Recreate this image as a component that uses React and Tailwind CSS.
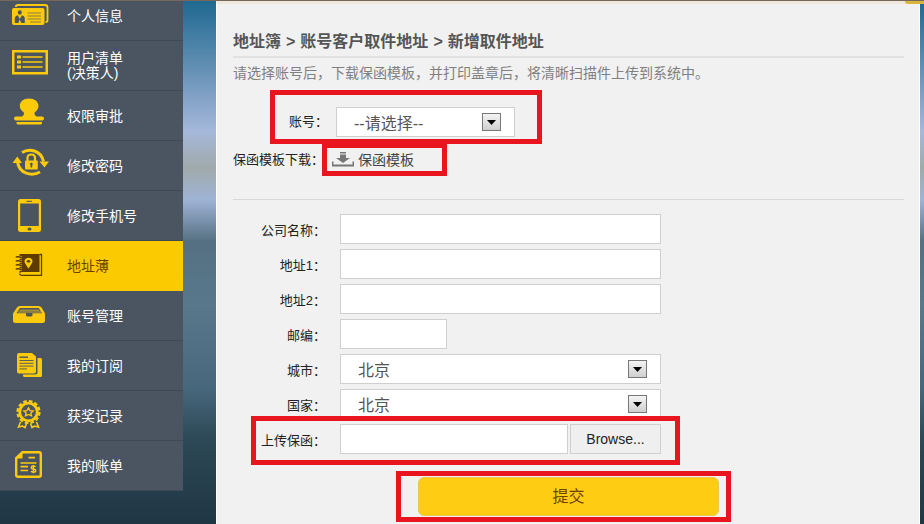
import clsx from 'clsx';

const CardIcon = () => (
  <>
    <path d="M6 11V10.5Q6 9 8 9H35Q37.500 9 37.500 11.500V24Q37.500 26 35.500 26" fill="none" stroke="currentColor" strokeWidth="1.800" />
    <rect x="2" y="12" width="32.500" height="17" rx="2" fill="currentColor" />
    <ellipse cx="9.800" cy="16.500" rx="2" ry="2.300" fill="#4b5561" />
    <path d="M4.800 27V22.500Q4.800 20 7.800 19.200L9.800 23L11.800 19.200Q14.800 20 14.800 22.500V27H11.300L9.800 23.500L8.300 27Z" fill="#4b5561" />
    <path d="M17.500 17H31M17.500 20H31M17.500 23H31M20 26H31" stroke="#4b5561" strokeOpacity="0.700" strokeWidth="0.900" />
  </>
);

const ListIcon = () => (
  <>
    <rect x="3.250" y="5.250" width="33.500" height="22" fill="none" stroke="currentColor" strokeWidth="2.500" />
    <path d="M7 9.500h4v3H7zM7 14.500h4v3H7zM7 19.500h4v3H7z" fill="currentColor" />
    <path d="M12.500 11H32.500M12.500 16H32.500M12.500 21H32.500" stroke="currentColor" strokeWidth="1.300" />
  </>
);

const StampIcon = () => (
  <>
    <path
      d="M19 2.500C24.500 2.500 28.500 5.500 28.500 10C28.500 12.800 26.800 14.800 25 16C24 17.200 24.500 19.500 26.500 20.500H32Q34 20.500 34 22.500Q34 24.500 32 24.500H6Q4 24.500 4 22.500Q4 20.500 6 20.500H12C14 19.500 14.500 17.200 13.500 16C11.500 14.800 9.800 12.800 9.800 10C9.800 5.500 13.500 2.500 19 2.500Z"
      fill="currentColor"
    />
    <path d="M6.500 26H32V27Q32 28.500 30.500 28.500H8Q6.500 28.500 6.500 27Z" fill="currentColor" />
  </>
);

const LockIcon = () => (
  <>
    <path d="M12 6.500C19 2 31 4 33.500 15.500" fill="none" stroke="currentColor" strokeWidth="3" />
    <path d="M30 26C22 30.500 9 28 7.500 15.500" fill="none" stroke="currentColor" strokeWidth="3" />
    <path d="M29.500 15.500H39L34.500 21.500ZM2.500 17L7.300 10.500L12 17Z" fill="currentColor" />
    <path d="M17.500 15.500V12Q17.500 8.500 21.300 8.500Q25 8.500 25 12V15.500" fill="none" stroke="currentColor" strokeWidth="2.200" />
    <rect x="15" y="14.500" width="12.800" height="9" rx="1" fill="currentColor" />
    <path d="M21.400 16.800a1.400 1.300 0 0 1 .8 2.400V21.500H20.600V19.200a1.400 1.300 0 0 1 .8-2.400Z" fill="#4b5561" />
  </>
);

const PhoneIcon = () => (
  <>
    <rect x="8" y="3" width="23" height="33" rx="2.500" fill="currentColor" />
    <rect x="10.200" y="7.500" width="18.600" height="22.500" fill="#4b5561" />
    <path d="M16.500 5.300H22" stroke="#4b5561" strokeWidth="1" />
    <ellipse cx="19.500" cy="33" rx="2" ry="1.600" fill="#4b5561" />
  </>
);

const BookIcon = () => (
  <>
    <path d="M9.500 8H29.500V26H12Q10 26 9.500 28Z" fill="currentColor" />
    <path d="M29.500 8.500H31.500V29.300H12Q9.800 29.300 9.800 27.800" fill="none" stroke="currentColor" strokeWidth="1.300" />
    <path d="M6.500 11.500H12M6.500 15.500H12M6.500 19.500H12M6.500 23.500H12" stroke="#fbca00" strokeWidth="2.400" />
    <path d="M6 11.500Q6.500 9.800 12 11.800M6 15.500Q6.500 13.800 12 15.800M6 19.500Q6.500 17.800 12 19.800M6 23.500Q6.500 21.800 12 23.800" fill="none" stroke="currentColor" strokeWidth="1.500" />
    <path d="M18.500 22.500C16 18.500 14.500 17 14.500 15.200C14.500 13 16.300 11.800 18.500 11.800C20.700 11.800 22.500 13 22.500 15.200C22.500 17 21 18.500 18.500 22.500Z" fill="#fbca00" />
    <ellipse cx="18.500" cy="15.300" rx="1.700" ry="1.400" fill="currentColor" />
  </>
);

const TrayIcon = () => (
  <>
    <path d="M10 10H28.500Q30.500 10 31.500 11.500L35 17.500V24.500Q35 27 32.500 27H5.500Q3 27 3 24.500V17.500L7 11.500Q8 10 10 10Z" fill="currentColor" />
    <path d="M9.800 12H28.800L32 17.200H22.500V19.200Q22.500 20.500 21 20.500H17.500Q16 20.500 16 19.200V17.200H6.500Z" fill="#4b5561" />
    <path d="M9.500 14.200H29.300M8 16H31" stroke="currentColor" strokeWidth="0.900" strokeOpacity="0.800" />
    <path d="M16.800 17H21.800V19H16.800Z" fill="#4b5561" />
  </>
);

const DocsIcon = () => (
  <>
    <path d="M27.500 12H30.500Q32 12 32 13.500V29.500Q32 31 30.500 31H14.500Q13 31 13 29.500V28.500H25.500Q27.500 28.500 27.500 26.500Z" fill="currentColor" />
    <path d="M9 7H22L26 10.500V25.500Q26 27.500 24 27.500H9Q7 27.500 7 25.500V9Q7 7 9 7Z" fill="currentColor" />
    <path d="M9.500 11.200H18" stroke="#4b5561" strokeWidth="1.400" />
    <path d="M9.500 14.500H23.500M9.500 17.300H23.500M9.500 20.100H23.500M9.500 22.900H17" stroke="#4b5561" strokeWidth="0.900" />
  </>
);

const MedalIcon = () => (
  <>
    <circle cx="18.500" cy="16" r="8.800" fill="none" stroke="currentColor" strokeWidth="2.800" />
    <circle cx="18.500" cy="16" r="10.900" fill="none" stroke="currentColor" strokeWidth="2.400" strokeDasharray="3.600 2.107" />
    <path d="M18.500 11.800L20 14.600L23.200 15L20.900 17L21.500 19.800L18.500 18.500L15.500 19.800L16.100 17L13.800 15L17 14.600Z" fill="none" stroke="currentColor" strokeWidth="1.300" />
    <path d="M10.500 26L8.500 31L12.500 30L15 31.500L16.500 27.500M26.500 26L28.500 31L24.500 30L22 31.500L20.500 27.500" fill="none" stroke="currentColor" strokeWidth="1.600" />
  </>
);

const BillIcon = () => (
  <>
    <path d="M12.500 6.300H29Q30.800 6.300 30.800 8V29Q30.800 30.700 29 30.700H8Q6.200 30.700 6.200 29V12Z" fill="none" stroke="currentColor" strokeWidth="2.400" />
    <path d="M5.500 12.500L12.500 5.500V12.500Z" fill="currentColor" />
    <path d="M18.500 11.700H25M10.500 17H26.500M10.500 20.700H18M10.500 24.500H18" stroke="currentColor" strokeWidth="1.700" />
    <path d="M25.500 20.800Q24.800 20 23.400 20Q21.300 20 21.300 21.500Q21.300 23 23.400 23Q25.700 23.100 25.700 24.700Q25.700 26.200 23.400 26.200Q21.600 26.200 21 25.200M23.400 18.900V27.300" fill="none" stroke="currentColor" strokeWidth="1.400" />
  </>
);

const menu = [
  { label: ['个人信息'], icon: CardIcon },
  { label: ['用户清单', '(决策人)'], icon: ListIcon },
  { label: ['权限审批'], icon: StampIcon },
  { label: ['修改密码'], icon: LockIcon },
  { label: ['修改手机号'], icon: PhoneIcon },
  { label: ['地址薄'], icon: BookIcon, active: true },
  { label: ['账号管理'], icon: TrayIcon },
  { label: ['我的订阅'], icon: DocsIcon },
  { label: ['获奖记录'], icon: MedalIcon },
  { label: ['我的账单'], icon: BillIcon },
];

function Sidebar() {
  return (
    <nav className="w-[183px] shrink-0 overflow-hidden">
      <ul className="-mt-[10px]">
        {menu.map(({ label, icon: Icon, active }) => (
          <li key={label[0]}>
            <a
              href="#"
              className={clsx(
                'flex h-[50px] items-center gap-[17px] border-b pl-[10px] text-sm leading-[15px]',
                active ? 'border-[#fbca00] bg-[#fbca00] text-[#6b4200]' : 'border-[#3f4954] bg-[#4b5561] text-white'
              )}
            >
              <svg
                viewBox="0 0 40 40"
                className={clsx('h-10 w-10 shrink-0', active ? 'text-[#5e3c00]' : 'text-[#fbca0c]')}
                aria-hidden="true"
              >
                <Icon />
              </svg>
              <span className="pt-px">
                {label.map((line) => (
                  <span key={line} className="block">{line}</span>
                ))}
              </span>
            </a>
          </li>
        ))}
      </ul>
    </nav>
  );
}

function Select({ id, options }) {
  return (
    <div className="relative h-[30px] w-full">
      <select
        id={id}
        className="h-full w-full appearance-none border border-[#cfcfcf] bg-white pl-[17px] pr-10 pt-[3px] text-base leading-6 text-[#555]"
      >
        {options.map((o) => (
          <option key={o}>{o}</option>
        ))}
      </select>
      <span className="pointer-events-none absolute right-[14px] top-[6px] flex h-[18px] w-[19px] items-center justify-center border border-[#777] bg-linear-to-b from-[#f4f4f4] to-[#cfcfcf]">
        <svg viewBox="0 0 9 5" className="h-[5px] w-[9px]" aria-hidden="true">
          <path d="M0 0H9L4.500 5Z" fill="#000" />
        </svg>
      </span>
    </div>
  );
}

function Row({ id, label, className, children }) {
  return (
    <div className={clsx('flex max-w-[428px] items-center gap-[14px]', className)}>
      <label htmlFor={id} className="w-[93px] shrink-0 pt-1 text-right text-[13px] leading-5 text-[#222]">
        {label}
      </label>
      {children}
    </div>
  );
}

const inputClass = 'h-[30px] min-w-0 border border-[#cfcfcf] bg-white px-2 text-sm';

export default function App() {
  return (
    <div className="relative flex min-h-screen border-t border-[#75685a] bg-[linear-gradient(#1f6990_0%,#6a93b8_14%,#a5b8da_25%,#a0aaaa_32%,#9fb3d6_38%,#557082_46%,#59788c_58%,#47677c_74%,#2d4856_84%,#1f3645_100%)] font-['Liberation_Sans','Noto_Sans_CJK_SC',sans-serif]">
      <Sidebar />

      <main className="ml-[33px] mr-1 min-w-0 flex-1 border-x border-t-3 border-x-white border-t-[#efe8dc] bg-[#f1f1f1] pb-0.5 pl-4 pr-[15px]">
        <h1 className="flex gap-[5px] border-b-2 border-[#e1e1e1] pb-[4px] pt-7 text-base leading-5 font-bold text-[#555]">
          <span>地址簿</span>
          <span>&gt;</span>
          <span>账号客户取件地址</span>
          <span>&gt;</span>
          <span>新增取件地址</span>
        </h1>
        <p className="mt-[5px] text-sm leading-5 text-[#808080]">
          请选择账号后，下载保函模板，并打印盖章后，将清晰扫描件上传到系统中。
        </p>

        <form>
          {/* Account */}
          <div className="ml-[37px] mt-[7px] flex h-[54px] w-[272px] items-center gap-2 border-5 border-[#e8141e] pl-[14px] pr-[22px] pt-[10px]">
            <label htmlFor="account" className="shrink-0 text-[13px] leading-5 text-[#222]">账号：</label>
            <Select id="account" options={['--请选择--']} />
          </div>

          {/* Template download */}
          <div className="-mt-px flex h-[33px] items-center">
            <span className="w-[89px] shrink-0 whitespace-nowrap text-[13px] leading-5 text-[#222]">保函模板下载：</span>
            <a
              href="#"
              className="z-10 flex h-full w-[125px] items-center gap-1 border-5 border-[#e8141e] bg-[#f1f1f1] pl-[5px] text-sm text-[#444]"
            >
              <svg viewBox="0 0 22 15" className="h-[15px] w-[22px] shrink-0" aria-hidden="true">
                <path d="M8 0H14V1.500H8ZM8 2.500H14V6H18L11 11L4 6H8Z" fill="#777" />
                <path d="M0 9.500H1.500V12.500H20.500V9.500H22V14.500H0Z" fill="#777" />
              </svg>
              <span>保函模板</span>
            </a>
          </div>

          {/* Address */}
          <div className="mt-[23px] flex flex-col gap-[5px] border-t border-[#d8d8d8] pt-[14px]">
            <Row id="company" label="公司名称：">
              <input id="company" type="text" className={clsx(inputClass, 'flex-1')} />
            </Row>
            <Row id="address1" label="地址1：">
              <input id="address1" type="text" className={clsx(inputClass, 'flex-1')} />
            </Row>
            <Row id="address2" label="地址2：">
              <input id="address2" type="text" className={clsx(inputClass, 'flex-1')} />
            </Row>
            <Row id="zip" label="邮编：">
              <input id="zip" type="text" className={clsx(inputClass, 'w-[107px]')} />
            </Row>
            <Row id="city" label="城市：">
              <Select id="city" options={['北京']} />
            </Row>
            <Row id="country" label="国家：">
              <Select id="country" options={['北京']} />
            </Row>
            <Row id="letter" label="上传保函：" className="relative">
              <div className="flex flex-1 gap-0.5">
                <input id="letter" type="text" className={clsx(inputClass, 'flex-1')} />
                <button type="button" className="h-[30px] w-[91px] border border-[#cfcfcf] bg-[#efefef] text-sm text-[#222]">
                  Browse...
                </button>
              </div>
              <span className="pointer-events-none absolute -top-2 -right-[19px] -bottom-[11px] left-[18px] border-5 border-[#e8141e]" />
            </Row>
          </div>

          <div className="ml-[163px] mt-[17px] w-[335px] border-5 border-[#e8141e] pb-px pl-[17px] pr-[7px] pt-px">
            <button
              type="submit"
              className="block h-[39px] w-full rounded-md border border-[#e8c850] bg-[#ffcc14] text-base text-[#6b4200]"
            >
              提交
            </button>
          </div>
        </form>
      </main>

      <span className="absolute right-0 top-0 h-[3px] w-[19px] rounded-bl-full bg-[#d9b63a]" />
    </div>
  );
}
